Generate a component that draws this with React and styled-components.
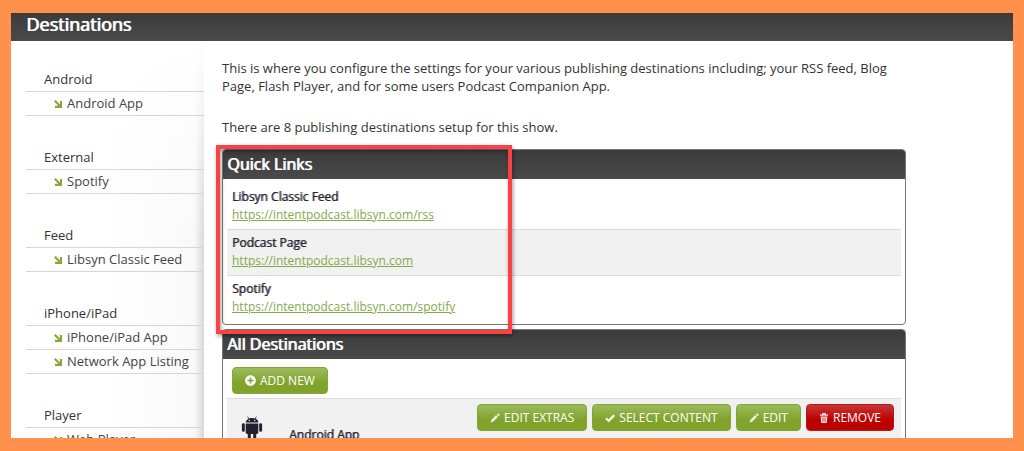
import React from "react";
import styled, { createGlobalStyle } from "styled-components";
import { FaPlusCircle } from "react-icons/fa";

const menu = [
  { title: "Android", items: ["Android App"] },
  { title: "External", items: ["Spotify"] },
  { title: "Feed", items: ["Libsyn Classic Feed"] },
  { title: "iPhone/iPad", items: ["iPhone/iPad App", "Network App Listing"] },
  { title: "Player", items: ["Web Player"] },
];

const quickLinks = [
  { label: "Libsyn Classic Feed", url: "https://intentpodcast.libsyn.com/rss" },
  { label: "Podcast Page", url: "https://intentpodcast.libsyn.com" },
  { label: "Spotify", url: "https://intentpodcast.libsyn.com/spotify" },
];

const Arrow = () => (
  <svg width="8" height="8" viewBox="0 0 8 8" aria-hidden="true">
    <path
      d="M0.8 0.8L6 6M1 6.9H7V1"
      fill="none"
      stroke="#86a836"
      strokeWidth="2.1"
    />
  </svg>
);

const Pencil = () => (
  <svg width="10" height="10" viewBox="0 0 10 10" aria-hidden="true">
    <path
      d="M0.6 9.4L1.3 6.9L6.1 2.1L7.9 3.9L3.1 8.7ZM6.8 1.4L7.6 0.6Q8 0.2 8.4 0.6L9.4 1.6Q9.8 2 9.4 2.4L8.6 3.2Z"
      fill="#eef4e0"
    />
  </svg>
);

const Check = () => (
  <svg width="10" height="10" viewBox="0 0 10 10" aria-hidden="true">
    <path
      d="M0.9 5.2L3.7 7.8L9.2 2.2"
      fill="none"
      stroke="#fff"
      strokeWidth="2.2"
    />
  </svg>
);

const Trash = () => (
  <svg width="10" height="10" viewBox="0 0 10 10" aria-hidden="true">
    <path
      d="M3.6 1.6V0.6H6.4V1.6M0.9 2.2H9.1"
      fill="none"
      stroke="#f8dede"
      strokeWidth="1.2"
    />
    <path d="M1.7 3.5H8.3L7.8 10H2.2Z" fill="#f8dede" />
    <path d="M3.8 4.5V9M5 4.5V9M6.2 4.5V9" stroke="#c43030" strokeWidth="0.6" />
  </svg>
);

const Robot = () => (
  <svg width="22" height="26" viewBox="0 0 22 26" aria-hidden="true">
    <path
      d="M6.6 0.6L8 2.8M15.4 0.6L14 2.8"
      stroke="#22222e"
      strokeWidth="0.8"
    />
    <path d="M4.7 6.6C4.9 3.6 7.6 1.9 11 1.9S17.1 3.6 17.3 6.6Z" fill="#22222e" />
    <circle cx="8.2" cy="4.5" r="0.7" fill="#f1f1f1" />
    <circle cx="13.8" cy="4.5" r="0.7" fill="#f1f1f1" />
    <path d="M4.7 7.4H17.3V16.6Q17.3 18 15.9 18H6.1Q4.7 18 4.7 16.6Z" fill="#22222e" />
    <rect x="0.9" y="7.2" width="2.9" height="8.6" rx="1.4" fill="#22222e" />
    <rect x="18.2" y="7.2" width="2.9" height="8.6" rx="1.4" fill="#22222e" />
    <rect x="6.8" y="15" width="3" height="8.4" rx="1.4" fill="#22222e" />
    <rect x="12.2" y="15" width="3" height="8.4" rx="1.4" fill="#22222e" />
  </svg>
);

const App = () => {
  return (
    <Frame>
      <GlobalStyle />
      <PageHeader>
        <h1>Destinations</h1>
      </PageHeader>
      <Content>
        <Sidebar>
          {menu.map((group) => (
            <MenuGroup key={group.title}>
              <h2>{group.title}</h2>
              <ul>
                {group.items.map((item) => (
                  <li key={item}>
                    <MenuLink href="#">
                      <Arrow />
                      {item}
                    </MenuLink>
                  </li>
                ))}
              </ul>
            </MenuGroup>
          ))}
        </Sidebar>
        <Main>
          <Intro>
            <p>
              This is where you configure the settings for your various
              publishing destinations including; your RSS feed, Blog Page, Flash
              Player, and for some users Podcast Companion App.
            </p>
            <p>There are 8 publishing destinations setup for this show.</p>
          </Intro>
          <Highlighted>
            <Panel>
              <PanelTitle>Quick Links</PanelTitle>
              <LinkList>
                {quickLinks.map((link) => (
                  <li key={link.url}>
                    <Label>{link.label}</Label>
                    <a href={link.url}>{link.url}</a>
                  </li>
                ))}
              </LinkList>
            </Panel>
            <Marker />
          </Highlighted>
          <Panel>
            <PanelTitle>All Destinations</PanelTitle>
            <Toolbar>
              <Button>
                <FaPlusCircle size={11} />
                ADD NEW
              </Button>
            </Toolbar>
            <Destination>
              <DestinationName>
                <Robot />
                <Label>Android App</Label>
              </DestinationName>
              <Actions>
                <Button>
                  <Pencil />
                  EDIT EXTRAS
                </Button>
                <Button>
                  <Check />
                  SELECT CONTENT
                </Button>
                <Button>
                  <Pencil />
                  EDIT
                </Button>
                <Button $danger>
                  <Trash />
                  REMOVE
                </Button>
              </Actions>
            </Destination>
          </Panel>
        </Main>
      </Content>
    </Frame>
  );
};

const GlobalStyle = createGlobalStyle`
  * {
    margin: 0;
    padding: 0;
    box-sizing: border-box;
  }
  body {
    font-family: "Open Sans", sans-serif;
    font-size: 13px;
    line-height: 18px;
    color: #333;
    background: #fff;
  }
  ul {
    list-style: none;
  }
`;
const Frame = styled.div`
  height: 100vh;
  display: flex;
  flex-direction: column;
  overflow: hidden;
  border: solid #ff914d;
  border-width: 13px 11px;
`;
const PageHeader = styled.header`
  flex-shrink: 0;
  padding: 0 15px 6px;
  background: linear-gradient(#3b3b3b, #4a4a4a);
  > h1 {
    font-size: 18px;
    line-height: 22px;
    font-weight: 400;
    color: #fff;
    text-shadow: 1px 0 0 #fff;
  }
`;
const Content = styled.div`
  flex: 1;
  min-height: 0;
  display: flex;
`;
const Sidebar = styled.nav`
  width: 193px;
  flex-shrink: 0;
  padding: 27px 0 0 15px;
  background: linear-gradient(#fff, transparent 200px),
    linear-gradient(to right, #fff 50%, #f9f9f9 95%, #d8d8d8);
`;
const MenuGroup = styled.section`
  padding-bottom: 30px;
  > h2 {
    padding-left: 18px;
    font-size: 13px;
    line-height: 23px;
    font-weight: 400;
    border-bottom: solid 1px #d6d6d6;
  }
`;
const MenuLink = styled.a`
  display: flex;
  align-items: center;
  gap: 5px;
  padding-left: 28px;
  line-height: 23px;
  color: #444;
  text-decoration: none;
  border-bottom: solid 1px #d6d6d6;
`;
const Main = styled.main`
  flex: 1;
  min-width: 0;
  max-width: 702px;
  padding: 18px 0 0 18px;
`;
const Intro = styled.div`
  display: grid;
  gap: 23px;
  padding-bottom: 13px;
`;
const Highlighted = styled.div`
  position: relative;
  margin-bottom: 4px;
`;
const Marker = styled.div`
  position: absolute;
  top: -4px;
  bottom: -9px;
  left: -6px;
  width: 296px;
  border: solid 4px #fb4143;
  box-shadow: 1px 2px 4px rgba(0, 0, 0, 0.4),
    inset 1px 2px 4px rgba(0, 0, 0, 0.4);
  pointer-events: none;
`;
const Panel = styled.section`
  border: solid 1px #77777c;
  border-radius: 4px;
  overflow: hidden;
`;
const PanelTitle = styled.h2`
  padding: 0 4px;
  font-size: 16px;
  line-height: 29px;
  font-weight: 400;
  color: #fff;
  text-shadow: 1px 0 0 #fff;
  background: linear-gradient(#3b3b3b, #4a4a4a);
`;
const Label = styled.strong`
  font-weight: 400;
  color: #22222e;
  text-shadow: 1px 0 0 rgba(34, 34, 46, 0.6);
`;
const LinkList = styled.ul`
  padding: 5px 4px 3px;
  > li {
    display: flex;
    flex-direction: column;
    align-items: flex-start;
    padding: 4px 5px 5px;
    font-size: 12px;
  }
  > li + li {
    border-top: solid 1px #dcdcdc;
  }
  > li:nth-child(even) {
    background: #f1f1f1;
  }
  a {
    color: #86a94a;
  }
`;
const Toolbar = styled.div`
  padding: 8px 9px 4px;
`;
const Button = styled.button`
  display: flex;
  align-items: center;
  gap: 4px;
  padding: 0 12px;
  font-family: inherit;
  font-size: 12px;
  line-height: 25px;
  color: #fff;
  border: solid 1px ${({ $danger }) => ($danger ? "#b81818" : "#83a43a")};
  border-radius: 4px;
  background: ${({ $danger }) =>
    $danger
      ? "linear-gradient(#c93636, #bb0000 60%)"
      : "linear-gradient(#9cba5c, #80a32c 60%)"};
`;
const Destination = styled.div`
  display: flex;
  align-items: flex-start;
  justify-content: space-between;
  margin: 0 4px;
  padding: 5px 7px 40px 14px;
  background: #f1f1f1;
  border-top: solid 1px #dcdcdc;
`;
const DestinationName = styled.div`
  display: flex;
  gap: 26px;
  padding-top: 12px;
  font-size: 12px;
  > ${Label} {
    padding-top: 10px;
  }
`;
const Actions = styled.div`
  display: flex;
  gap: 5px;
`;
export default App;
